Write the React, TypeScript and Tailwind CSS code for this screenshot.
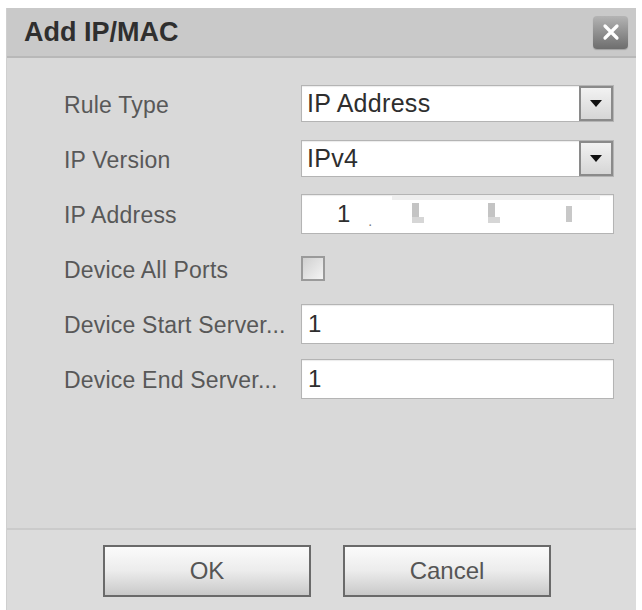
import React from "react";

const font = { fontFamily: '"Liberation Sans", Arial, sans-serif' };

function Caret() {
  return (
    <div className="flex h-full w-[34px] items-center justify-center border-2 border-[#8a8a8a] bg-gradient-to-b from-[#f2f2f2] to-[#d6d6d6]">
      <svg width="12" height="8" viewBox="0 0 12 8">
        <polygon points="0,0 12,0 6,7" fill="#111" />
      </svg>
    </div>
  );
}

function Select({ value }: { value: string }) {
  return (
    <div className="flex h-[37px] w-[313px] items-stretch border border-[#b4b4b4] bg-white shadow-[inset_0_1px_1px_rgba(0,0,0,0.08)]">
      <div className="flex flex-1 items-center pl-[5px] text-[25px] leading-none tracking-[0.3px] text-[#2e2e2e]">{value}</div>
      <Caret />
    </div>
  );
}

function TextInput({ value }: { value: string }) {
  return (
    <div className="flex h-[40px] w-[313px] items-center border border-[#b4b4b4] bg-white pl-[6px] text-[24px] leading-none text-[#2e2e2e] shadow-[inset_0_1px_1px_rgba(0,0,0,0.08)]">
      {value}
    </div>
  );
}

function IpInput() {
  return (
    <div className="relative flex h-[40px] w-[313px] items-center border border-[#b4b4b4] bg-white text-[24px] leading-none text-[#2e2e2e] shadow-[inset_0_1px_1px_rgba(0,0,0,0.08)]">
      <span className="ml-[35px]">1</span>
      <span className="ml-[18px] mt-[14px] text-[14px] text-[#777]">.</span>
      <div className="ml-[40px] flex h-[22px] w-[10px] flex-col">
        <div className="h-[14px] w-[7px] bg-[#c4c4c4]" />
        <div className="h-[6px] w-[12px] bg-[#d6d6d6]" />
      </div>
      <div className="ml-[66px] flex h-[22px] w-[10px] flex-col">
        <div className="h-[14px] w-[7px] bg-[#c4c4c4]" />
        <div className="h-[6px] w-[12px] bg-[#d6d6d6]" />
      </div>
      <div className="ml-[68px] h-[16px] w-[6px] bg-[#c8c8c8]" />
      <div className="absolute left-[90px] top-[1px] h-[4px] w-[208px] bg-[#eeeeee]" />
    </div>
  );
}

function Row({ label, children }: { label: string; children: React.ReactNode }) {
  return (
    <div className="flex h-[55px] items-center">
      <div className="w-[237px] whitespace-nowrap pt-[4px] text-[23px] leading-none tracking-[0.2px] text-[#585858]">{label}</div>
      {children}
    </div>
  );
}

export default function App() {
  return (
    <div className="min-h-[610px] w-[642px] overflow-hidden bg-white pl-[6px] pt-[8px]" style={font}>
      <div className="flex h-[602px] w-[630px] flex-col border-l border-[#cfcfcf] bg-[#d9d9d9]">
        <div className="flex h-[50px] items-center justify-between border-b-2 border-[#b8b8b8] bg-[#c9c9c9] pl-[17px] pr-[8px]">
          <div className="text-[27px] font-bold leading-none text-[#2f2f2f]">Add IP/MAC</div>
          <div className="flex h-[33px] w-[35px] items-center justify-center rounded-[4px] bg-gradient-to-b from-[#b4b4b4] to-[#6e6e6e] shadow-[0_1px_1px_rgba(0,0,0,0.2)]">
            <svg width="18" height="18" viewBox="0 0 18 18">
              <path d="M3 3 L15 15 M15 3 L3 15" stroke="#fff" strokeWidth="3.2" strokeLinecap="round" />
            </svg>
          </div>
        </div>
        <div className="h-[470px] pl-[57px] pt-[18px]">
          <Row label="Rule Type">
            <Select value="IP Address" />
          </Row>
          <Row label="IP Version">
            <Select value="IPv4" />
          </Row>
          <Row label="IP Address">
            <IpInput />
          </Row>
          <Row label="Device All Ports">
            <div className="h-[25px] w-[24px] border-2 border-[#9a9a9a] bg-gradient-to-br from-[#d0d0d0] to-[#f4f4f4]" />
          </Row>
          <Row label="Device Start Server...">
            <TextInput value="1" />
          </Row>
          <Row label="Device End Server...">
            <TextInput value="1" />
          </Row>
        </div>
        <div className="flex flex-1 gap-[32px] border-t-2 border-[#cbcbcb] bg-[#dcdcdc] pl-[96px] pt-[15px]">
          <button className="flex h-[52px] w-[208px] items-center justify-center border-2 border-[#6a6a6a] bg-gradient-to-b from-[#fbfbfb] via-[#ececec] to-[#c9c9c9] text-[24px] text-[#555]">
            OK
          </button>
          <button className="flex h-[52px] w-[208px] items-center justify-center border-2 border-[#6a6a6a] bg-gradient-to-b from-[#fbfbfb] via-[#ececec] to-[#c9c9c9] text-[24px] text-[#555]">
            Cancel
          </button>
        </div>
      </div>
    </div>
  );
}
